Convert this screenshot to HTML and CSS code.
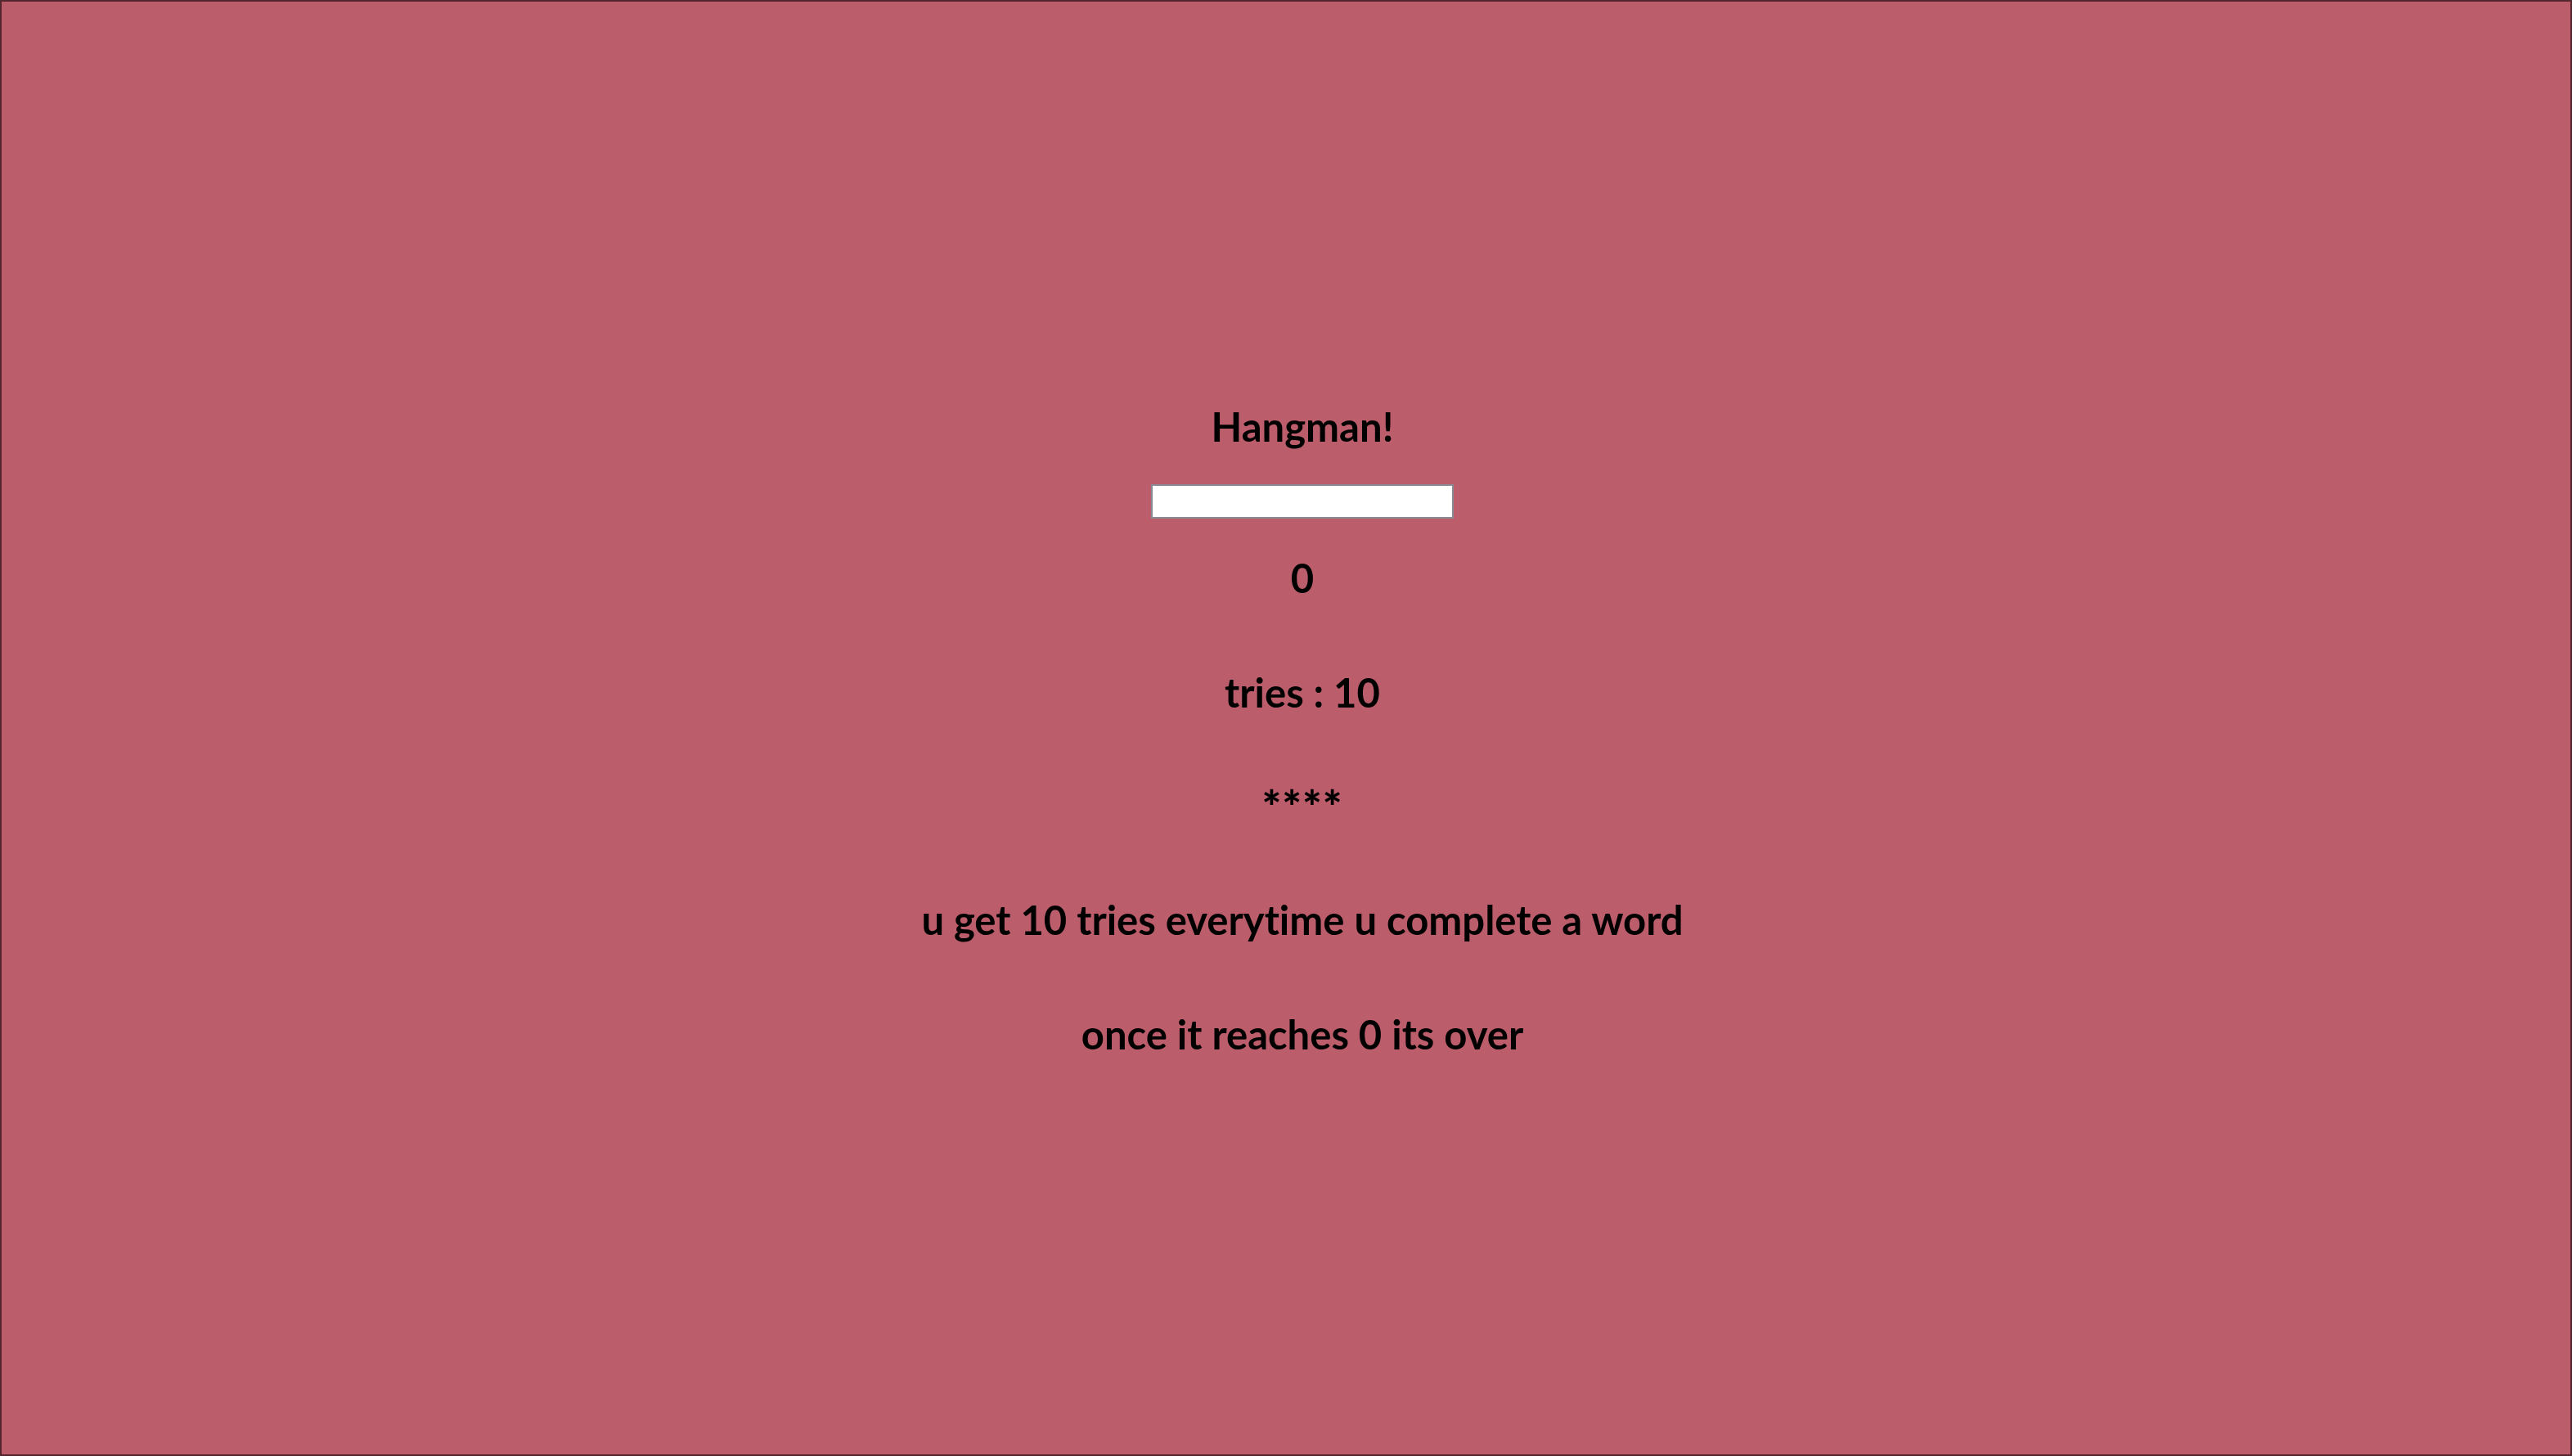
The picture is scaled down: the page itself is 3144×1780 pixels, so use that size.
FILE: index.html
```html
<!DOCTYPE html>
<html lang="en">
<head>
<meta charset="utf-8">
<title>Hangman!</title>
<link rel="stylesheet" href="styles.css">
</head>
<body>
<main class="page">
  <h1 class="title">Hangman!</h1>
  <input class="guess" type="text" aria-label="guess">
  <p class="line score">0</p>
  <p class="line tries">tries : 10</p>
  <p class="line word">****</p>
  <p class="line info first">u get 10 tries everytime u complete a word</p>
  <p class="line info">once it reaches 0 its over</p>
</main>
</body>
</html>
```

FILE: styles.css
```css
* { box-sizing: border-box; }
html, body {
  margin: 0;
  padding: 0;
  height: 100%;
}
body {
  background: #bc5d6b;
  font-family: "Lato", "Open Sans", sans-serif;
  font-variant-ligatures: none;
  color: #000;
}
.page {
  height: 100vh;
  border: 2px solid #56262f;
  padding: 4px 0 0 40px;
  display: flex;
  flex-direction: column;
  align-items: center;
  justify-content: center;
}
.title {
  margin: 0;
  font-size: 49px;
  font-weight: 700;
  line-height: 60px;
}
.guess {
  margin: 41px 0 42px;
  width: 370px;
  height: 42px;
  background: #fff;
  border: 2px solid #8a8a95;
  padding: 0 6px;
  font-size: 24px;
}
.line {
  margin: 0;
  font-size: 49px;
  font-weight: 700;
  line-height: 60px;
}
.tries { margin-top: 80px; }
.word { margin-top: 80px; font-size: 56px; font-weight: 900; letter-spacing: 1px; }
.info { margin-top: 80px; }
.info.first { margin-top: 78px; }
```
